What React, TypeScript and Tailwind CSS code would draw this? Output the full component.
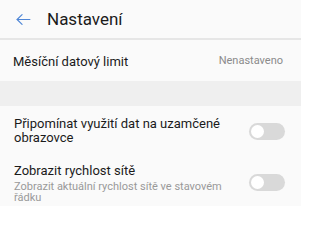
import React from 'react';

const Toggle: React.FC = () => (
  <div className="relative w-[36px] h-[17px] rounded-full bg-[#d9d9d9] shrink-0">
    <div className="absolute left-[2px] top-[2px] w-[13px] h-[13px] rounded-full bg-white" />
  </div>
);

const App: React.FC = () => {
  return (
    <div
      className="w-[301px] h-[206px] overflow-hidden bg-[#fafafa] text-[#1b1b1b]"
      style={{ fontFamily: 'Roboto, "Noto Sans", sans-serif' }}
    >
      <div className="h-[38px] flex items-center pl-[15px]">
        <svg width="17" height="17" viewBox="0 0 24 24" fill="none" stroke="#4f86d6" strokeWidth="1.6" strokeLinecap="round" strokeLinejoin="round">
          <path d="M21 12H3" />
          <path d="M10 5l-7 7 7 7" />
        </svg>
        <span className="ml-[15px] text-[17px] leading-none">Nastavení</span>
      </div>
      <div className="h-[2px] bg-[#e6e6e6]" />

      <div className="h-[41px] flex items-center justify-between pl-[13px] pr-[18px]">
        <span className="text-[13px] pt-[2px]">Měsíční datový limit</span>
        <span className="text-[11px] text-[#8a8a8a] pt-[2px]">Nenastaveno</span>
      </div>

      <div className="h-[25px] bg-[#efefef]" />

      <div className="flex items-center justify-between pl-[14px] pr-[16px] pt-[11px] pb-[12px]">
        <div className="text-[13px] leading-[14px] w-[210px]">
          Připomínat využití dat na uzamčené obrazovce
        </div>
        <Toggle />
      </div>

      <div className="flex items-center justify-between pl-[14px] pr-[16px] pt-[5px]">
        <div className="w-[225px]">
          <div className="text-[13px] leading-[17px]">Zobrazit rychlost sítě</div>
          <div className="text-[11px] leading-[11px] text-[#999] mt-[2px]">
            Zobrazit aktuální rychlost sítě ve stavovém řádku
          </div>
        </div>
        <Toggle />
      </div>
    </div>
  );
};

export default App;
